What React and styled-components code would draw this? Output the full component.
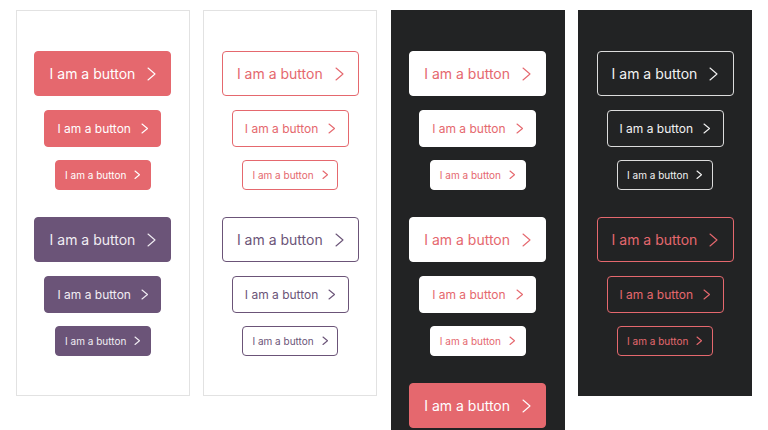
import React from "react";
import styled, { createGlobalStyle, css } from "styled-components";

const Global = createGlobalStyle`
  html, body { margin: 0; padding: 0; background: #ffffff; }
  body { font-family: Inter, "Noto Sans", sans-serif; }
`;

const CORAL = "#e5686e";
const PURPLE = "#6b5478";
const DARK = "#222324";

const Page = styled.div`
  display: flex;
  align-items: flex-start;
  gap: 13.4px;
  padding: 10px 16px 0;
  height: 430px;
  box-sizing: border-box;
  overflow: hidden;
`;

const Panel = styled.div`
  width: 174px;
  box-sizing: border-box;
  display: flex;
  flex-direction: column;
  align-items: center;
  gap: 27px;
  padding: 40px 0 39px;
  background: ${(p) => (p.$dark ? DARK : "#ffffff")};
  border: 1px solid ${(p) => (p.$dark ? DARK : "#e2e2e2")};
`;

const Group = styled.div`
  display: flex;
  flex-direction: column;
  align-items: center;
  gap: 13.5px;
`;

const sizes = {
  lg: css`
    width: 137px;
    height: 45px;
    font-size: 14px;
    gap: 12px;
  `,
  md: css`
    width: 117px;
    height: 37px;
    font-size: 12px;
    gap: 10px;
  `,
  sm: css`
    width: 96px;
    height: 30px;
    font-size: 10px;
    gap: 8px;
  `,
};

const variants = {
  coral: css`
    background: ${CORAL};
    color: #fff;
    border: 1.5px solid ${CORAL};
  `,
  purple: css`
    background: ${PURPLE};
    color: #f1edf3;
    border: 1.5px solid ${PURPLE};
  `,
  coralOutline: css`
    background: transparent;
    color: ${CORAL};
    border: 1.5px solid ${CORAL};
  `,
  purpleOutline: css`
    background: transparent;
    color: ${PURPLE};
    border: 1.5px solid ${PURPLE};
  `,
  white: css`
    background: #ffffff;
    color: ${CORAL};
    border: 1.5px solid #ffffff;
  `,
  lightOutline: css`
    background: transparent;
    color: #f2f2f2;
    border: 1.5px solid #dcdcdc;
  `,
};

const Btn = styled.button`
  box-sizing: border-box;
  display: flex;
  align-items: center;
  justify-content: center;
  border-radius: 4px;
  font-family: Inter, "Noto Sans", sans-serif;
  font-weight: 400;
  padding: 0;
  cursor: pointer;
  ${(p) => sizes[p.$size]}
  ${(p) => variants[p.$variant]}
`;

const chev = { lg: [7, 12], md: [5.5, 9], sm: [4.5, 7.5] };

const Chevron = ({ size }) => {
  const [w, h] = chev[size];
  return (
    <svg width={w + 2} height={h + 2} viewBox={`0 0 ${w + 2} ${h + 2}`} fill="none">
      <polyline
        points={`1,1 ${w + 1},${h / 2 + 1} 1,${h + 1}`}
        stroke="currentColor"
        strokeWidth="1.1"
        strokeLinecap="round"
        strokeLinejoin="round"
      />
    </svg>
  );
};

const Button = ({ size, variant }) => (
  <Btn $size={size} $variant={variant}>
    <span>I am a button</span>
    <Chevron size={size} />
  </Btn>
);

const Trio = ({ variant }) => (
  <Group>
    <Button size="lg" variant={variant} />
    <Button size="md" variant={variant} />
    <Button size="sm" variant={variant} />
  </Group>
);

export default function App() {
  return (
    <>
      <Global />
      <Page>
        <Panel>
          <Trio variant="coral" />
          <Trio variant="purple" />
        </Panel>
        <Panel>
          <Trio variant="coralOutline" />
          <Trio variant="purpleOutline" />
        </Panel>
        <Panel $dark>
          <Trio variant="white" />
          <Trio variant="white" />
          <Group>
            <Button size="lg" variant="coral" />
          </Group>
        </Panel>
        <Panel $dark>
          <Trio variant="lightOutline" />
          <Trio variant="coralOutline" />
        </Panel>
      </Page>
    </>
  );
}
